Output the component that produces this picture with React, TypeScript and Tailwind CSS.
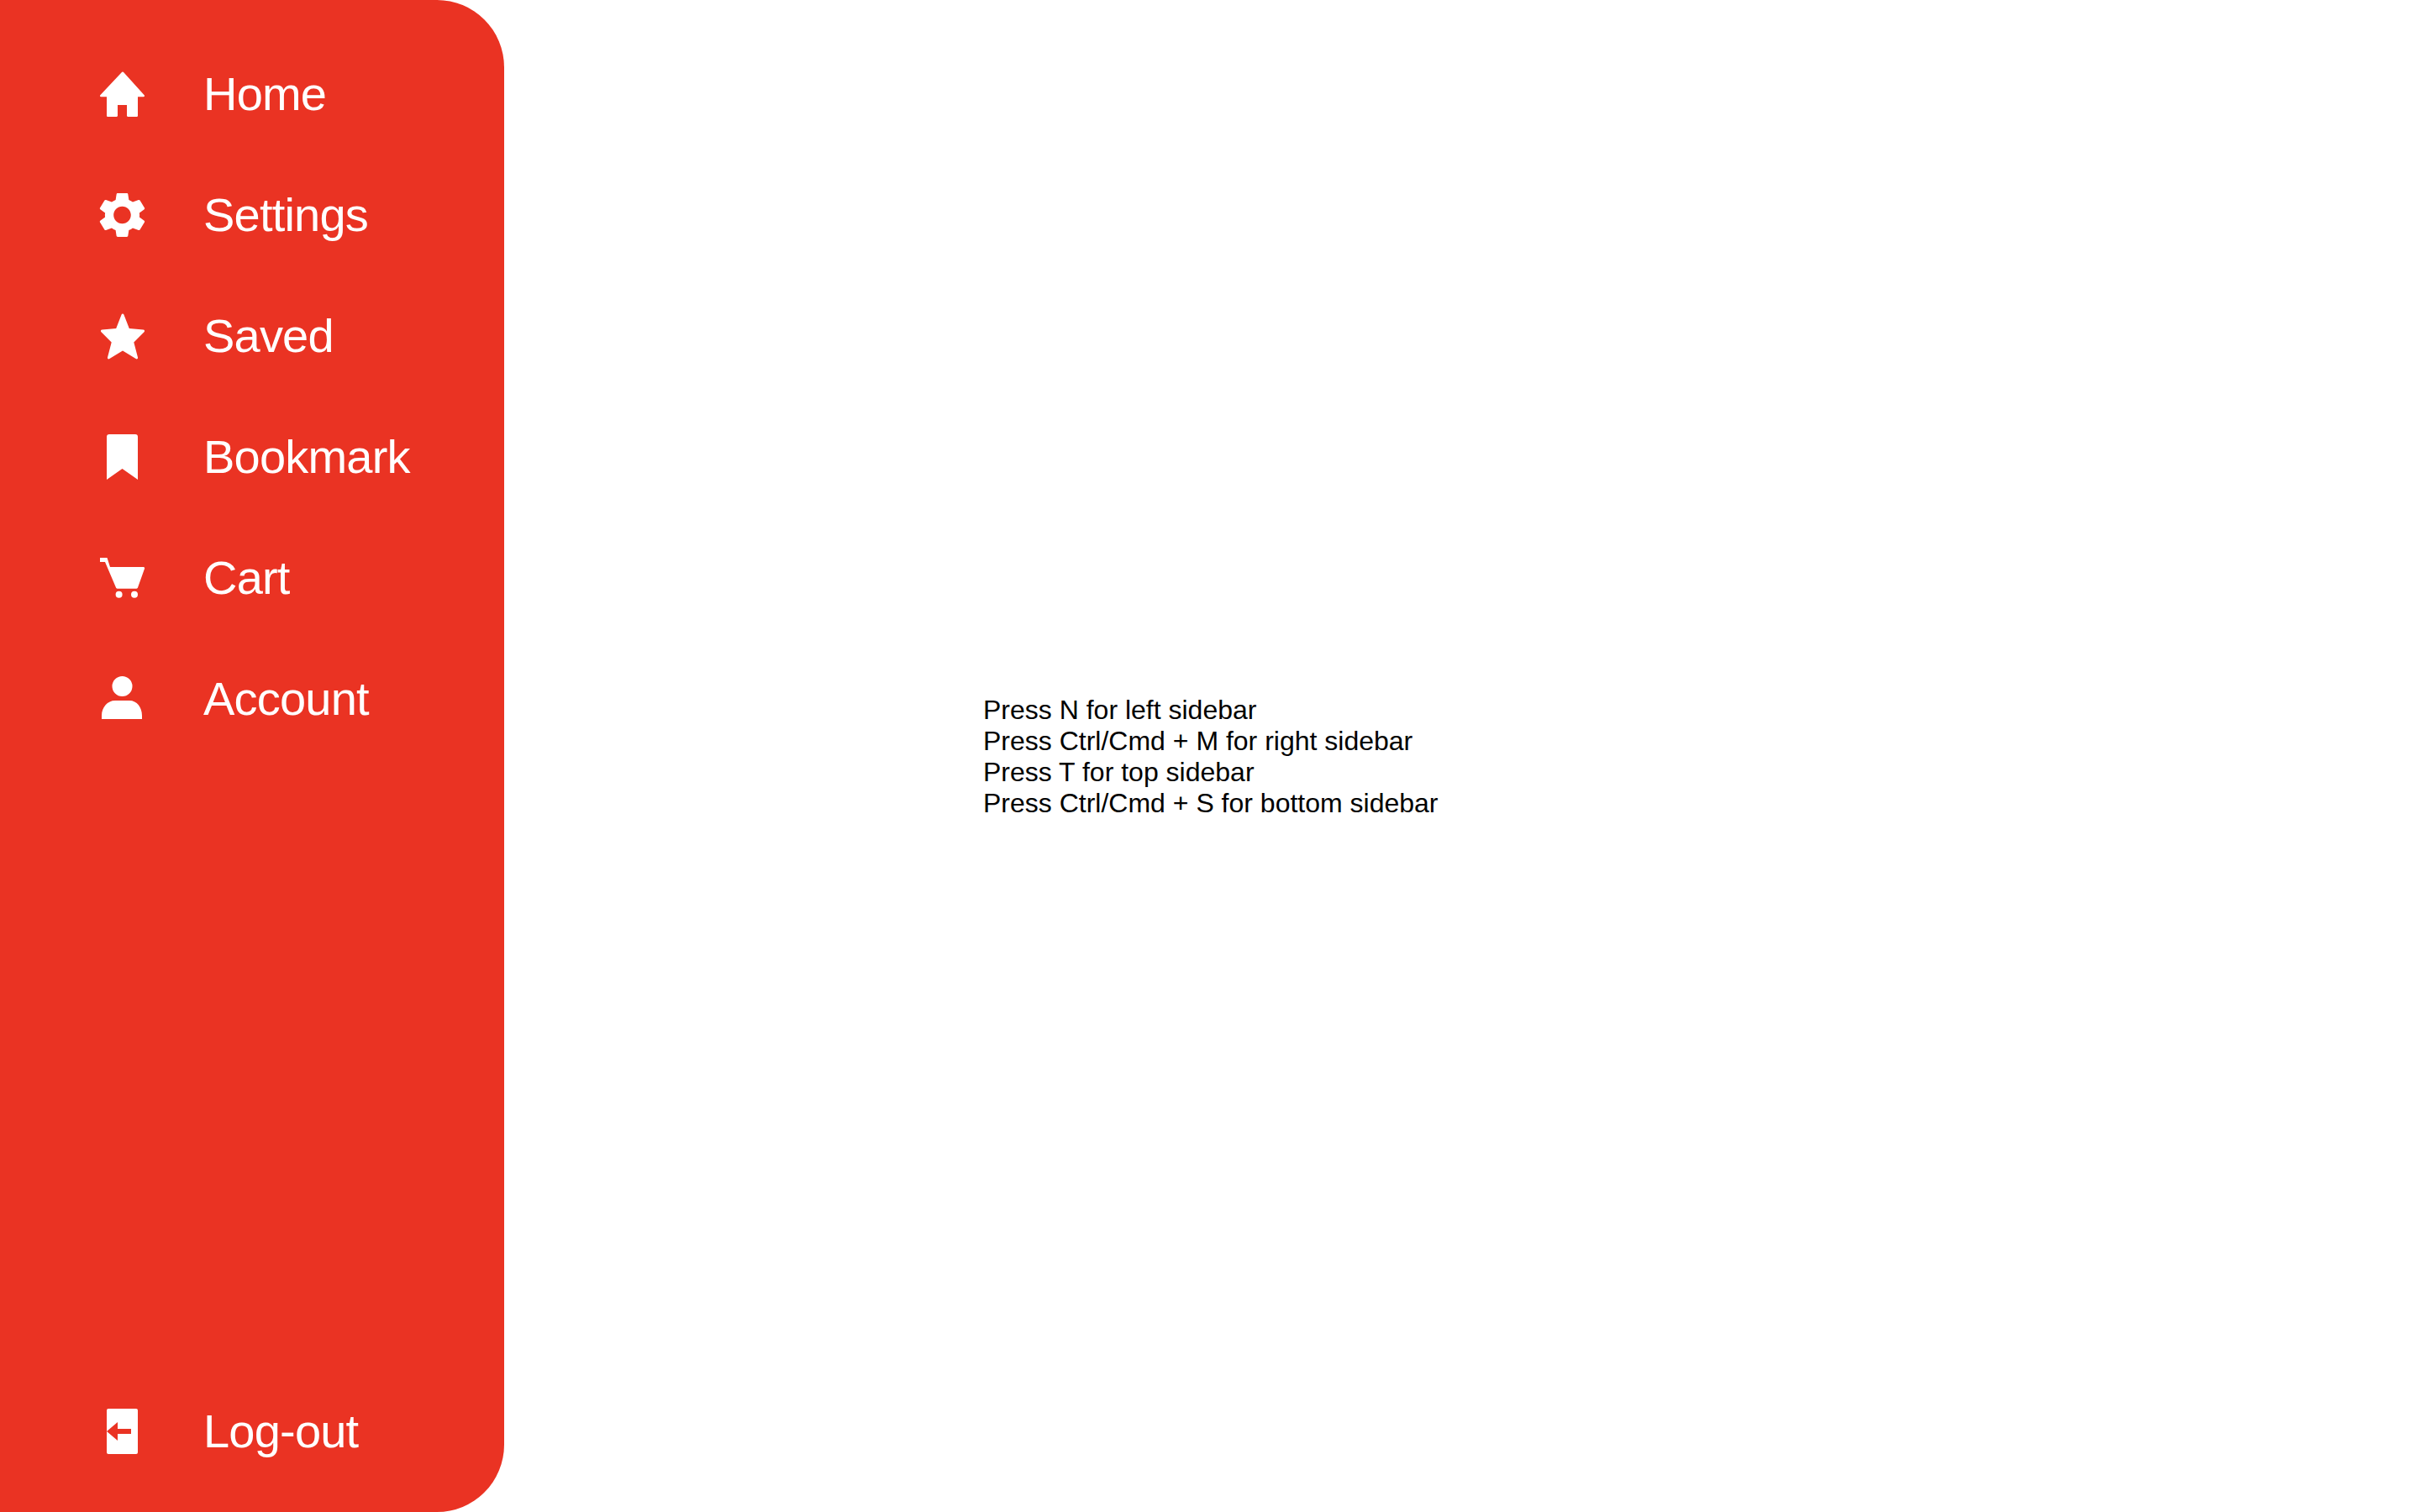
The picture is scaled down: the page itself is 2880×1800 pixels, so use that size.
import type { ReactNode } from "react";

const items: [string, ReactNode][] = [
  ["Home", <path d="M32 5.5c.6 0 1 .3 1.3.7l24.4 27c.7.9.3 2-.9 2H50v22.3c0 1-.7 1.5-1.5 1.5H38.5c-.9 0-1.5-.6-1.5-1.5V45H26v12.5c0 .9-.6 1.5-1.5 1.5H14.5c-.8 0-1.5-.5-1.5-1.5V35.200H6.200c-1.200 0-1.600-1.100-.9-2l25.400-27c.3-.4.7-.7 1.300-.7z" />],
  ["Settings", <g transform="translate(-2.84 -0.4) scale(2.86 2.7)"><path d="M19.140 12.940c.04-.3.06-.61.06-.94 0-.32-.02-.64-.07-.94l2.030-1.580c.18-.14.23-.41.12-.61l-1.920-3.320c-.12-.22-.37-.29-.59-.22l-2.390.96c-.5-.38-1.030-.7-1.620-.94l-.36-2.540c-.04-.24-.24-.41-.48-.41h-3.840c-.24 0-.43.17-.47.41l-.36 2.540c-.59.24-1.130.57-1.620.94l-2.390-.96c-.22-.08-.47 0-.59.22L2.740 8.870c-.12.21-.08.47.12.61l2.030 1.580c-.05.3-.09.63-.09.94s.02.64.07.94l-2.030 1.580c-.18.14-.23.41-.12.61l1.920 3.320c.12.22.37.29.59.22l2.390-.96c.5.38 1.030.7 1.620.94l.36 2.540c.05.24.24.41.48.41h3.840c.24 0 .44-.17.47-.41l.36-2.540c.59-.24 1.130-.56 1.620-.94l2.390.96c.22.08.47 0 .59-.22l1.920-3.320c.12-.22.07-.47-.12-.61l-2.010-1.580zM12 15.800c-2 0-3.600-1.700-3.600-3.800s1.600-3.800 3.600-3.800 3.600 1.700 3.600 3.800-1.600 3.800-3.600 3.800z" /></g>],
  ["Saved", <path d="M30.600 6.500c.5-1.500 2.300-1.500 2.800 0l6.400 16.500 16.700 1.400c1.600.1 2 1.800 1 2.800L45.300 39.500l4.700 18c.4 1.500-1.200 2.500-2.400 1.600L32 49.500 16.400 59.100c-1.200.9-2.800-.1-2.400-1.600l4.700-18L6.500 27.200c-1-1-.6-2.700 1-2.800L24.200 23z" />],
  ["Bookmark", <path d="M16 5h31a3 3 0 0 1 3 3v51L31.500 46 13 59V8a3 3 0 0 1 3-3z" />],
  ["Cart", <path d="M5 8h8.500l3.500 11h39.700c1 0 1.700.9 1.400 1.800L50 43.500c-.2.7-.8 1.200-1.500 1.200H25.500c-.7 0-1.300-.5-1.500-1.200L11 13H5zM27.600 47.700a4 4 0 1 1 0 8 4 4 0 0 1 0-8zM46 47.700a4 4 0 1 1 0 8 4 4 0 0 1 0-8z" />],
  ["Account", <path d="M31.500 5a12 12 0 1 1 0 24 12 12 0 0 1 0-24zM7 56v-4c0-10 7-18 16-18h17c9 0 15 8 15 18v4z" />],
];

function Row({ label, icon }: { label: string; icon: ReactNode }) {
  return (
    <div className="flex h-[144px] items-center pl-[114px]">
      <svg viewBox="0 0 64 64" fill="white" className="h-[64px] w-[64px] shrink-0">{icon}</svg>
      <span className="ml-[64px] text-[56px] leading-[64px] tracking-[-0.8px] text-white">{label}</span>
    </div>
  );
}

export default function App() {
  return (
    <div className="flex h-[1800px] w-[2880px] bg-white font-['Liberation_Sans',Arial,sans-serif]">
      <nav className="flex h-full w-[600px] shrink-0 flex-col justify-between rounded-r-[80px] bg-[#ea3323] pt-[40px]">
        <div>
          {items.map(([label, icon]) => <Row key={label} label={label} icon={icon} />)}
        </div>
        <div className="pb-[24px]">
          <Row label="Log-out" icon={<path fillRule="evenodd" d="M15 5h33a2 2 0 0 1 2 2v50a2 2 0 0 1-2 2H15a2 2 0 0 1-2-2V7a2 2 0 0 1 2-2zM13 32l13 11V35h16v-6H26v-8z" />} />
        </div>
      </nav>
      <main className="flex-1 pl-[570px] pt-[827px] text-[32px] leading-[37px] text-black">
        <p>Press N for left sidebar</p>
        <p>Press Ctrl/Cmd + M for right sidebar</p>
        <p>Press T for top sidebar</p>
        <p>Press Ctrl/Cmd + S for bottom sidebar</p>
      </main>
    </div>
  );
}
